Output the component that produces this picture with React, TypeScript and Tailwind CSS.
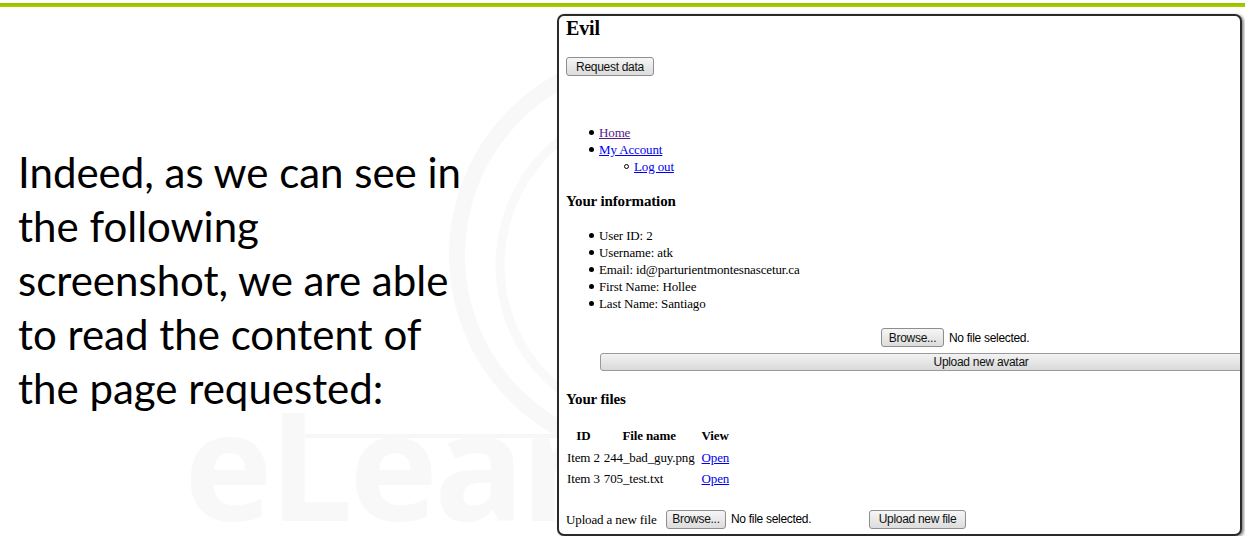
import React from "react";

const serif = { fontFamily: '"Liberation Serif", "Times New Roman", serif' };
const sans = { fontFamily: '"Liberation Sans", Arial, sans-serif' };

function Btn({ children, className = "" }: { children: React.ReactNode; className?: string }) {
  return (
    <div
      className={`flex h-[19px] items-center justify-center rounded-[3px] border border-[#8e8e8e] bg-gradient-to-b from-[#f6f6f6] to-[#dcdcdc] px-[8px] text-[12px] tracking-[-0.3px] text-[#111] ${className}`}
      style={sans}
    >
      {children}
    </div>
  );
}

function Bullet({ hollow = false }: { hollow?: boolean }) {
  return (
    <span
      className={`mr-[5px] inline-block h-[5px] w-[5px] shrink-0 rounded-full ${hollow ? "border border-black" : "bg-black"}`}
    />
  );
}

function Watermark() {
  return (
    <div className="pointer-events-none absolute inset-0 overflow-hidden">
      <svg width="1245" height="536" className="absolute left-0 top-0">
        <circle cx="655" cy="255" r="198" fill="none" stroke="#f8f8f8" strokeWidth="16" />
        <circle cx="660" cy="265" r="160" fill="none" stroke="#f9f9f9" strokeWidth="9" />
        <rect x="305" y="434" width="260" height="4" fill="#f7f7f7" />
      </svg>
      <div
        className="absolute left-[184px] top-[388px] h-[148px] w-[373px] overflow-hidden whitespace-nowrap text-[150px] font-bold leading-none tracking-[-4px] text-[#f8f8f8]"
        style={{ fontFamily: '"Open Sans", sans-serif' }}
      >
        eLearn
      </div>
    </div>
  );
}

export default function App() {
  return (
    <div className="relative h-[536px] w-[1245px] overflow-hidden bg-white">
      <Watermark />
      <div className="relative mt-[3px] h-[4px] bg-gradient-to-b from-[#94bf00] to-[#a8d000]" />
      <div className="relative flex">
        <div
          className="w-[557px] shrink-0 pl-[18px] pt-[138px] text-[42px] leading-[54px] text-black"
          style={{ fontFamily: 'Lato, "Open Sans", sans-serif' }}
        >
          <div>Indeed, as we can see in</div>
          <div>the following</div>
          <div>screenshot, we are able</div>
          <div>to read the content of</div>
          <div>the page requested:</div>
        </div>

        <div
          className="mt-[7px] h-[522px] w-[685px] shrink-0 overflow-hidden rounded-[7px] border-2 border-[#2a2a2a] bg-white pl-[7px] text-[13px] tracking-[-0.13px] text-black shadow-[2px_1px_3px_rgba(0,0,0,0.45)]"
          style={serif}
        >
          <div className="text-[20px] font-bold leading-[24px]">Evil</div>

          <Btn className="mt-[17px] w-[88px]">Request data</Btn>

          <ul className="mt-[48px] pl-[23px] leading-[17px]">
            <li className="flex items-center">
              <Bullet />
              <a className="text-[#551a8b] underline">Home</a>
            </li>
            <li className="flex items-center">
              <Bullet />
              <a className="text-[#0000ee] underline">My Account</a>
            </li>
            <li className="flex items-center pl-[35px]">
              <Bullet hollow />
              <a className="text-[#0000ee] underline">Log out</a>
            </li>
          </ul>

          <div className="mt-[17px] text-[15px] font-bold leading-[18px]">Your information</div>

          <ul className="mt-[17px] pl-[23px] leading-[17px]">
            {[
              "User ID: 2",
              "Username: atk",
              "Email: id@parturientmontesnascetur.ca",
              "First Name: Hollee",
              "Last Name: Santiago",
            ].map((t) => (
              <li key={t} className="flex items-center">
                <Bullet />
                {t}
              </li>
            ))}
          </ul>

          <div className="ml-[315px] mt-[16px] flex items-center gap-[5px]">
            <Btn className="w-[63px]">Browse...</Btn>
            <span className="text-[12px] tracking-[-0.3px]" style={sans}>
              No file selected.
            </span>
          </div>

          <div
            className="ml-[34px] mt-[6px] flex h-[18px] w-[762px] items-center justify-center rounded-[3px] border border-[#9a9a9a] bg-gradient-to-b from-[#f3f3f3] to-[#d9d9d9] text-[12px] tracking-[-0.3px] text-[#111]"
            style={sans}
          >
            Upload new avatar
          </div>

          <div className="mt-[19px] text-[15px] font-bold leading-[18px]">Your files</div>

          <table className="-ml-[2px] mt-[16px] border-separate border-spacing-x-[2px] border-spacing-y-[2px]">
            <thead>
              <tr className="h-[19px]">
                <th className="px-[1px] text-center">ID</th>
                <th className="px-[1px] text-center">File name</th>
                <th className="px-[1px] pl-[4px] text-left">View</th>
              </tr>
            </thead>
            <tbody>
              <tr className="h-[18px]">
                <td className="px-[1px]">Item 2</td>
                <td className="px-[1px]">244_bad_guy.png</td>
                <td className="px-[1px] pl-[4px]">
                  <a className="text-[#0000ee] underline">Open</a>
                </td>
              </tr>
              <tr className="h-[19px]">
                <td className="px-[1px]">Item 3</td>
                <td className="px-[1px]">705_test.txt</td>
                <td className="px-[1px] pl-[4px]">
                  <a className="text-[#0000ee] underline">Open</a>
                </td>
              </tr>
            </tbody>
          </table>

          <div className="mt-[19px] flex items-center">
            <span className="w-[100px]">Upload a new file</span>
            <Btn className="w-[60px]">Browse...</Btn>
            <span className="ml-[5px] w-[138px] text-[12px] tracking-[-0.3px]" style={sans}>
              No file selected.
            </span>
            <Btn className="w-[97px]">Upload new file</Btn>
          </div>
        </div>
      </div>
    </div>
  );
}
